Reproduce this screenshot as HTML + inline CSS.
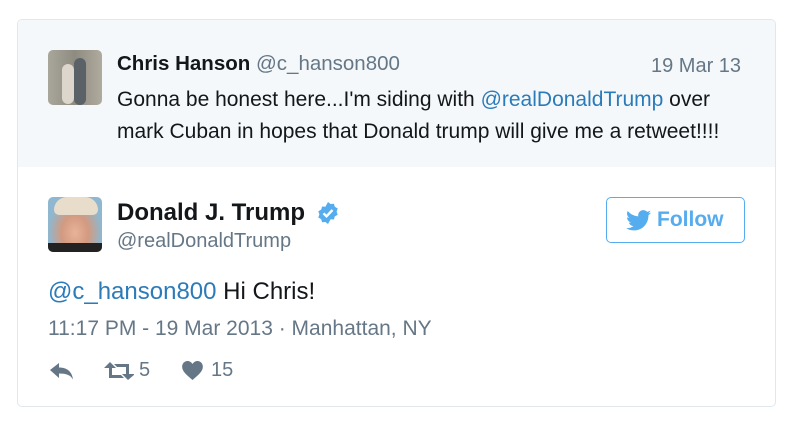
<!DOCTYPE html>
<html><head><style>
body{margin:0;width:799px;height:433px;background:#fff;font-family:"Liberation Sans",sans-serif;position:relative;overflow:hidden}
.card{position:absolute;left:17px;top:19px;width:759px;height:388px;border:1px solid #e1e8ed;border-radius:5px;overflow:hidden;box-sizing:border-box}
.top{position:absolute;left:0;top:0;width:100%;height:147px;background:#f5f8fa}
.a{position:absolute}
.blue{color:#2b7bb9}
</style></head><body>
<div class="card"><div class="top"></div></div>
<div class="a" style="left:48px;top:50px;width:54px;height:55px;border-radius:5px;background:linear-gradient(90deg,#a9a79b,#8e8b80 50%,#b0ab9f);overflow:hidden">
<div class="a" style="left:14px;top:14px;width:12px;height:40px;background:#dcd6cc;border-radius:6px"></div>
<div class="a" style="left:26px;top:8px;width:12px;height:47px;background:#5a6268;border-radius:6px"></div>
</div>
<div class="a" style="left:117px;top:52px;font-size:20.5px;color:#14171a;white-space:nowrap"><b>Chris Hanson</b> <span style="color:#657786">@c_hanson800</span></div>
<div class="a" style="left:651px;top:55px;font-size:20px;color:#657786">19 Mar 13</div>
<div class="a" style="left:117px;top:84px;font-size:21px;line-height:32px;color:#14171a;white-space:nowrap">Gonna be honest here...I'm siding with <span class="blue">@realDonaldTrump</span> over<br>mark Cuban in hopes that Donald trump will give me a retweet!!!!</div>

<div class="a" style="left:48px;top:197px;width:54px;height:55px;border-radius:5px;background:radial-gradient(ellipse at 50% 65%,#e7b39a 0,#d39a80 35%,#8fb7cf 70%);overflow:hidden">
<div class="a" style="left:6px;top:0;width:44px;height:18px;background:#e8dccb;border-radius:20px 20px 8px 8px"></div>
<div class="a" style="left:0;top:46px;width:54px;height:9px;background:#222"></div>
</div>
<div class="a" style="left:117px;top:199px;font-size:24px;font-weight:bold;color:#14171a">Donald J. Trump</div>
<svg class="a" style="left:316px;top:201px" width="24" height="24" viewBox="0 0 24 24"><path fill="#55acee" d="M12 1l2.6 2 3.3-.3.9 3.1 2.9 1.7-1.1 3.1 1.1 3.1-2.9 1.7-.9 3.1-3.3-.3L12 23l-2.6-2-3.3.3-.9-3.1-2.9-1.7 1.1-3.1-1.1-3.1 2.9-1.7.9-3.1 3.3.3z"/><path d="M7.5 12.3l3 3 6-6.3" stroke="#fff" stroke-width="2.4" fill="none"/></svg>
<div class="a" style="left:117px;top:230px;font-size:20px;color:#657786">@realDonaldTrump</div>
<div class="a" style="left:606px;top:197px;width:139px;height:46px;box-sizing:border-box;border:1.5px solid #55acee;border-radius:5px"></div>
<svg class="a" style="left:626px;top:210px" width="25" height="21" viewBox="0 0 24 20"><path fill="#55acee" d="M24 2.4c-.9.4-1.8.6-2.8.8 1-.6 1.8-1.6 2.2-2.7-1 .6-2 1-3.1 1.2C19.3.7 18 0 16.6 0c-2.7 0-4.9 2.2-4.9 4.9 0 .4 0 .8.1 1.1C7.7 5.8 4.1 3.9 1.7.9c-.4.7-.7 1.6-.7 2.5 0 1.7.9 3.2 2.2 4.1-.8 0-1.6-.2-2.2-.6v.1c0 2.4 1.7 4.4 3.9 4.8-.4.1-.8.2-1.3.2-.3 0-.6 0-.9-.1.6 2 2.4 3.4 4.6 3.4-1.7 1.3-3.8 2.1-6.1 2.1-.4 0-.8 0-1.2-.1 2.2 1.4 4.8 2.2 7.5 2.2 9.1 0 14-7.5 14-14v-.6c1-.7 1.8-1.6 2.5-2.5z"/></svg>
<div class="a" style="left:657px;top:208px;font-size:21px;font-weight:bold;color:#55acee">Follow</div>

<div class="a" style="left:48px;top:278px;font-size:24px;color:#14171a;white-space:nowrap"><span class="blue">@c_hanson800</span> Hi Chris!</div>
<div class="a" style="left:48px;top:317px;font-size:21px;color:#657786;white-space:nowrap">11:17 PM - 19 Mar 2013 · Manhattan, NY</div>
<svg class="a" style="left:50px;top:362px" width="24" height="18" viewBox="0 0 24 18"><path fill="#657786" d="M0 8l9-7v4.5c8 0 13 4 14 12-2.5-4.5-6.5-6-14-6V16z"/></svg>
<svg class="a" style="left:104px;top:362px" width="30" height="18" viewBox="0 0 30 18"><path fill="#657786" d="M6 0l6 6H8v7h9l3 3H5V6H0zM24 18l-6-6h4V5h-9l-3-3h15v10h6z"/></svg>
<div class="a" style="left:139px;top:359px;font-size:20px;color:#657786">5</div>
<svg class="a" style="left:182px;top:361px" width="21" height="19" viewBox="0 0 24 22"><path fill="#657786" d="M12 22C5 16 0 12 0 6.5 0 3 2.7 0 6.2 0 8.7 0 10.8 1.5 12 3.5 13.2 1.5 15.3 0 17.8 0 21.3 0 24 3 24 6.5 24 12 19 16 12 22z"/></svg>
<div class="a" style="left:211px;top:359px;font-size:20px;color:#657786">15</div>
</body></html>
